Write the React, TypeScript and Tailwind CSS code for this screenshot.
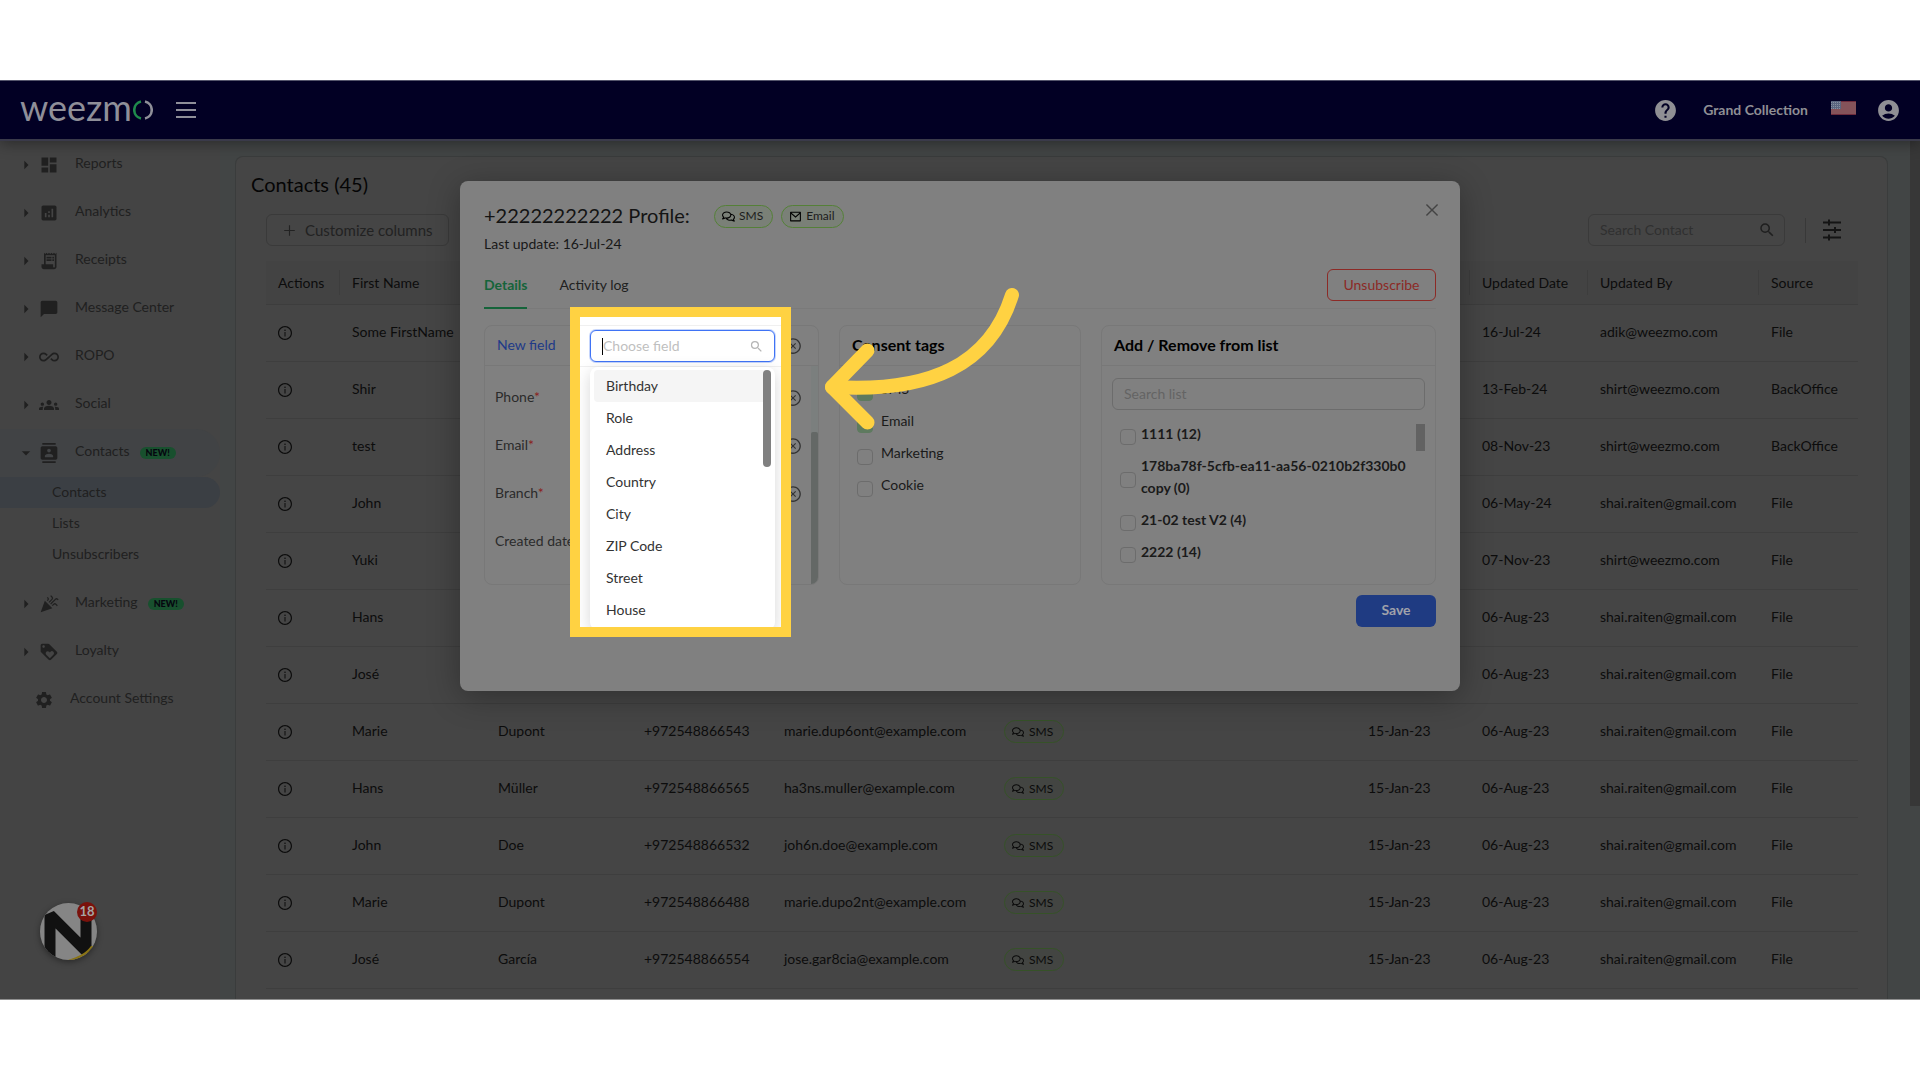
import { useState } from 'react'
import type { ReactNode } from 'react'
import type { IconType } from 'react-icons'
import {
  MdAccountCircle,
  MdAllInclusive,
  MdAnalytics,
  MdArrowDropDown,
  MdArrowRight,
  MdCelebration,
  MdChatBubble,
  MdContacts,
  MdDashboard,
  MdGroups,
  MdHelp,
  MdLoyalty,
  MdReceiptLong,
  MdSearch,
  MdSettings,
} from 'react-icons/md'
import { AiOutlineClose, AiOutlineCloseCircle, AiOutlineInfoCircle, AiOutlinePlus } from 'react-icons/ai'
import { FaRegComments } from 'react-icons/fa'
import { RiMailLine } from 'react-icons/ri'

// ── Data ───────────────────────────────────────────────────────────────────────

type NavItem = { label: string; icon: IconType; isNew?: boolean; children?: string[] }

const NAV: NavItem[] = [
  { label: 'Reports', icon: MdDashboard },
  { label: 'Analytics', icon: MdAnalytics },
  { label: 'Receipts', icon: MdReceiptLong },
  { label: 'Message Center', icon: MdChatBubble },
  { label: 'ROPO', icon: MdAllInclusive },
  { label: 'Social', icon: MdGroups },
  { label: 'Contacts', icon: MdContacts, isNew: true, children: ['Contacts', 'Lists', 'Unsubscribers'] },
  { label: 'Marketing', icon: MdCelebration, isNew: true },
  { label: 'Loyalty', icon: MdLoyalty },
]

const COLUMNS = [
  { title: 'Actions', width: 'w-[74px]' },
  { title: 'First Name', width: 'w-[146px]' },
  { title: '', width: 'w-[146px]' },
  { title: '', width: 'w-[140px]' },
  { title: '', width: 'w-[220px]' },
  { title: '', width: '' },
  { title: '', width: 'w-[114px]' },
  { title: 'Updated Date', width: 'w-[118px]' },
  { title: 'Updated By', width: 'w-[171px]' },
  { title: 'Source', width: 'w-[99px]' },
]

type Contact = {
  first: string
  last?: string
  phone?: string
  email?: string
  created?: string
  updated: string
  by: string
  source: string
}

const FILE_IMPORT = { updated: '06-Aug-23', by: 'shai.raiten@gmail.com', source: 'File' }

const CONTACTS: Contact[] = [
  { first: 'Some FirstName', updated: '16-Jul-24', by: 'adik@weezmo.com', source: 'File' },
  { first: 'Shir', updated: '13-Feb-24', by: 'shirt@weezmo.com', source: 'BackOffice' },
  { first: 'test', updated: '08-Nov-23', by: 'shirt@weezmo.com', source: 'BackOffice' },
  { first: 'John', updated: '06-May-24', by: 'shai.raiten@gmail.com', source: 'File' },
  { first: 'Yuki', updated: '07-Nov-23', by: 'shirt@weezmo.com', source: 'File' },
  { first: 'Hans', ...FILE_IMPORT },
  { first: 'José', ...FILE_IMPORT },
  { first: 'Marie', last: 'Dupont', phone: '+972548866543', email: 'marie.dup6ont@example.com', created: '15-Jan-23', ...FILE_IMPORT },
  { first: 'Hans', last: 'Müller', phone: '+972548866565', email: 'ha3ns.muller@example.com', created: '15-Jan-23', ...FILE_IMPORT },
  { first: 'John', last: 'Doe', phone: '+972548866532', email: 'joh6n.doe@example.com', created: '15-Jan-23', ...FILE_IMPORT },
  { first: 'Marie', last: 'Dupont', phone: '+972548866488', email: 'marie.dupo2nt@example.com', created: '15-Jan-23', ...FILE_IMPORT },
  { first: 'José', last: 'García', phone: '+972548866554', email: 'jose.gar8cia@example.com', created: '15-Jan-23', ...FILE_IMPORT },
]

const PROFILE_FIELDS = [
  { label: 'Phone', required: true },
  { label: 'Email', required: true },
  { label: 'Branch', required: true },
  { label: 'Created date', required: false },
]

const CONSENT_TAGS = [
  { label: 'SMS', checked: true },
  { label: 'Email', checked: true },
  { label: 'Marketing', checked: false },
  { label: 'Cookie', checked: false },
]

const LISTS = ['1111 (12)', '178ba78f-5cfb-ea11-aa56-0210b2f330b0 copy (0)', '21-02 test V2 (4)', '2222 (14)']

const FIELD_OPTIONS = ['Birthday', 'Role', 'Address', 'Country', 'City', 'ZIP Code', 'Street', 'House']

// ── Header ─────────────────────────────────────────────────────────────────────

function Logo() {
  return (
    <a href="#home" aria-label="weezmo" className="flex items-center gap-px text-[#8f8f99]">
      <span className="pb-1.5 text-[36px] leading-10">weezm</span>
      <svg width="20" height="20" viewBox="0 0 20 20" fill="none" strokeWidth="2.6">
        <path d="M8 1.6A8.600 8.600 0 0 0 8 18.400" stroke="#1f8a4c" />
        <path d="M12 1.6A8.600 8.600 0 0 1 12 18.400" stroke="currentColor" />
      </svg>
    </a>
  )
}

function UsFlag() {
  return (
    <svg width="25" height="14" viewBox="0 0 25 14">
      <rect width="25" height="14" fill="#85535a" />
      <path d="M0 .5h25M0 13.5h25" stroke="#6e2b3c" />
      <rect width="10" height="8" fill="#5b6580" />
      <path d="M0 1.5h10M0 3.5h10M0 5.5h10M0 7.5h10" stroke="#8790a0" strokeDasharray="1 1" />
    </svg>
  )
}

function Header() {
  return (
    <header className="relative z-10 flex h-[61px] items-center justify-between border-t border-b-2 border-t-[#55556c] border-b-[#3a3a4a] bg-[#020024] pr-[19px] pl-5 shadow-[0_2px_14px_rgba(0,0,0,0.4)]">
      <div className="flex items-center gap-[23px]">
        <Logo />
        <button type="button" aria-label="Toggle menu" className="flex flex-col gap-[5px]">
          <span className="h-0.5 w-5 bg-[#8f8f99]" />
          <span className="h-0.5 w-5 bg-[#8f8f99]" />
          <span className="h-0.5 w-5 bg-[#8f8f99]" />
        </button>
      </div>
      <div className="flex items-center text-[#8f8f94]">
        <button type="button" aria-label="Help" className="mr-[25px]">
          <MdHelp size={25} />
        </button>
        <span className="mr-[23px] pb-0.5 text-[14px] font-bold">Grand Collection</span>
        <button type="button" aria-label="Language" className="mr-5 pb-1">
          <UsFlag />
        </button>
        <button type="button" aria-label="Account">
          <MdAccountCircle size={25} />
        </button>
      </div>
    </header>
  )
}

// ── Sidebar ────────────────────────────────────────────────────────────────────

function NavRow({ item }: { item: NavItem }) {
  const Icon = item.icon
  const Arrow = item.children ? MdArrowDropDown : MdArrowRight
  return (
    <li>
      <a
        href={`#${item.label}`}
        className={`flex h-12 items-center pl-4 ${item.children ? 'rounded-r-[24px] bg-[#414345]' : 'bg-[#444444]'}`}
      >
        <Arrow size={20} className="mr-[3px]" />
        <Icon size={20} className="mr-4" />
        <span className="pb-1.5">{item.label}</span>
        {item.isNew && (
          <span className="ml-2.5 rounded-full bg-[#18502e] px-1.5 text-[9px] leading-3 font-black text-[#05060f]">NEW!</span>
        )}
      </a>
      {item.children && (
        <ul className="pb-2.5">
          {item.children.map((child, i) => (
            <li key={child}>
              <a
                href={`#${child}`}
                className={`flex h-[31px] items-center rounded-r-2xl pb-0.5 pl-[52px] ${i === 0 ? 'bg-[#3b3f44]' : ''}`}
              >
                {child}
              </a>
            </li>
          ))}
        </ul>
      )}
    </li>
  )
}

function Sidebar() {
  return (
    <nav className="w-[220px] shrink-0 bg-[#444444] text-[14px] text-[#202020]">
      <ul>
        {NAV.map((item) => (
          <NavRow key={item.label} item={item} />
        ))}
        <li>
          <a href="#settings" className="flex h-12 items-center pl-[34px]">
            <MdSettings size={20} className="mr-4" />
            <span className="pb-1.5">Account Settings</span>
          </a>
        </li>
      </ul>
    </nav>
  )
}

function ChatBadge() {
  return (
    <button type="button" aria-label="Open chat" className="absolute bottom-[39px] left-10 rounded-full shadow-[0_2px_6px_rgba(0,0,0,0.4)]">
      <svg width="57" height="57" viewBox="0 0 57 57" className="rounded-full">
        <rect width="57" height="57" fill="#858585" />
        <path d="M10 60V12L46 48V4" fill="none" stroke="#111111" strokeWidth="11" strokeLinejoin="bevel" />
        <path d="M28 57C38 54 46 50 51 43L57 43V57Z" fill="#8a7415" />
      </svg>
      <span className="absolute -top-px right-0 flex size-5 items-center justify-center rounded-full bg-[#7a120c] text-[13px] font-bold text-[#a5a5a5]">
        18
      </span>
    </button>
  )
}

// ── Contacts table ─────────────────────────────────────────────────────────────

function TableTag() {
  return (
    <span className="flex h-[23px] w-[60px] items-center gap-[5px] rounded-full border border-[#365228] bg-[#434542] pl-[7px] text-[12px] text-[#0b0b0b]">
      <FaRegComments size={12} />
      SMS
    </span>
  )
}

function SlidersIcon() {
  return (
    <svg width="18" height="22" viewBox="0 0 18 22" stroke="#141414" strokeWidth="2">
      <path d="M0 3.5H18M0 11H18M0 18.5H18M6 .5V6.500M12 8V14M6 15.500V21.500" />
    </svg>
  )
}

function ContactsTable() {
  return (
    <table className="w-full table-fixed text-left text-[14px] text-[#0c0c0c]">
      <thead>
        <tr className="h-[43px] border-b border-[#3d3d3d] bg-[#434343]">
          {COLUMNS.map((col, i) => (
            <th key={i} scope="col" className={`p-0 font-normal ${col.width}`}>
              <div className={`flex h-[25px] items-center pl-3 ${i < COLUMNS.length - 1 ? 'border-r border-[#3d3d3d]' : ''}`}>
                {col.title}
              </div>
            </th>
          ))}
        </tr>
      </thead>
      <tbody>
        {CONTACTS.map((c, i) => (
          <tr key={i} className="h-[57px] border-b border-[#3e3e3e] whitespace-nowrap">
            <td className="pl-[11px]">
              <button type="button" aria-label="Contact details" className="flex">
                <AiOutlineInfoCircle size={16} />
              </button>
            </td>
            <td className="pb-0.5 pl-3">{c.first}</td>
            <td className="pb-0.5 pl-3">{c.last}</td>
            <td className="pb-0.5 pl-3">{c.phone}</td>
            <td className="pb-0.5 pl-3">{c.email}</td>
            <td className="pl-3">{c.phone && <TableTag />}</td>
            <td className="pb-0.5 pl-3">{c.created}</td>
            <td className="pb-0.5 pl-3">{c.updated}</td>
            <td className="pb-0.5 pl-3">{c.by}</td>
            <td className="pb-0.5 pl-3">{c.source}</td>
          </tr>
        ))}
      </tbody>
    </table>
  )
}

function ContactsPage() {
  return (
    <main className="flex min-w-0 flex-1 bg-[#424545] pt-[15px] pl-[15px]">
      <section className="min-w-0 flex-1 rounded-t-lg border border-b-0 border-[#3a3c3c] bg-[#454545] pb-2.5">
        <h1 className="mt-[13px] ml-[15px] text-[20px] leading-7 text-[#050505]">Contacts (45)</h1>
        <div className="mt-4 mr-[29px] ml-[30px]">
          <div className="flex items-center justify-between">
            <button
              type="button"
              className="flex h-8 items-center gap-2 rounded-md border border-[#3a3a3a] px-[15px] text-[15px] text-[#222222]"
            >
              <AiOutlinePlus size={15} />
              Customize columns
            </button>
            <div className="flex items-center">
              <label className="flex h-8 w-[197px] items-center rounded-md border border-[#3a3a3a] pr-2 pl-[11px]">
                <input
                  type="text"
                  aria-label="Search Contact"
                  placeholder="Search Contact"
                  className="min-w-0 flex-1 bg-transparent pb-0.5 text-[14px] outline-none placeholder:text-[#303030]"
                />
                <MdSearch size={18} className="text-[#1f1f1f]" />
              </label>
              <span className="mr-[17px] ml-5 h-[25px] w-px bg-[#383838]" />
              <button type="button" aria-label="Filters" className="mr-[17px]">
                <SlidersIcon />
              </button>
            </div>
          </div>
          <div className="mt-[15px]">
            <ContactsTable />
          </div>
        </div>
      </section>
      <div className="-mt-[15px] ml-[22px] w-2.5 shrink-0">
        <div className="h-[665px] bg-[#373737]" />
      </div>
    </main>
  )
}

// ── Profile dialog ─────────────────────────────────────────────────────────────

function ChannelTag({ icon: Icon, children }: { icon: IconType; children: ReactNode }) {
  return (
    <span className="flex h-[23px] items-center gap-1 rounded-full border border-[#558038] bg-[#7a8077] pr-[9px] pl-[7px] text-[12px] text-[#1c1c1c]">
      <Icon size={13} className="text-black" />
      {children}
    </span>
  )
}

function Checkbox({ id, checked, onChange }: { id: string; checked?: boolean; onChange?: () => void }) {
  return (
    <input
      id={id}
      type="checkbox"
      checked={checked}
      onChange={onChange}
      className="mt-1.5 size-4 shrink-0 appearance-none rounded border border-[#6c6c6c] checked:border-[#5e7a5f] checked:bg-[#5e7a5f]"
    />
  )
}

function Card({ width, header, children }: { width: string; header: ReactNode; children: ReactNode }) {
  return (
    <section className={`h-[260px] overflow-hidden rounded-lg border border-[#787878] ${width}`}>
      <div className="flex h-10 items-center border-b border-[#787878] pl-3">{header}</div>
      {children}
    </section>
  )
}

function ProfileFields() {
  return (
    <Card
      width="w-[335px] shrink-0"
      header={
        <>
          <a href="#new-field" className="flex-1 pb-0.5 text-[14px] text-[#203a88]">
            New field
          </a>
          <button type="button" aria-label="Cancel new field" className="mr-4 text-[#333333]">
            <AiOutlineCloseCircle size={18} />
          </button>
        </>
      }
    >
      <div className="flex h-full justify-between">
        <ul className="flex-1 pt-2 pr-[9px] pl-2.5 text-[14px] text-[#2b2b2b]">
          {PROFILE_FIELDS.map((field) => (
            <li key={field.label} className="flex h-12 items-center justify-between">
              <span className="pb-1">
                {field.label}
                {field.required && <span className="text-[#8a2020]">*</span>}
              </span>
              {field.required && (
                <button type="button" aria-label={`Clear ${field.label}`} className="text-[#333333]">
                  <AiOutlineCloseCircle size={18} />
                </button>
              )}
            </li>
          ))}
        </ul>
        <div className="w-[7px] bg-[#7b7f7e] pt-[66px]">
          <div className="h-full rounded-t-xs bg-[#646866]" />
        </div>
      </div>
    </Card>
  )
}

function ConsentTags() {
  const [tags, setTags] = useState(CONSENT_TAGS)
  const toggle = (label: string) =>
    setTags(tags.map((t) => (t.label === label ? { ...t, checked: !t.checked } : t)))

  return (
    <Card width="w-[242px] shrink-0" header={<h3 className="pb-0.5 text-[16px] font-bold text-black">Consent tags</h3>}>
      <ul className="pt-2 pl-[17px] text-[14px] text-[#1a1a1a]">
        {tags.map((tag) => (
          <li key={tag.label} className="flex h-8 items-center gap-2">
            <Checkbox id={`tag-${tag.label}`} checked={tag.checked} onChange={() => toggle(tag.label)} />
            <label htmlFor={`tag-${tag.label}`} className="pb-1">
              {tag.label}
            </label>
          </li>
        ))}
      </ul>
    </Card>
  )
}

function ListMembership() {
  return (
    <Card width="min-w-0 flex-1" header={<h3 className="pb-0.5 text-[16px] font-bold text-black">Add / Remove from list</h3>}>
      <div className="px-2.5 pt-3">
        <input
          type="text"
          aria-label="Search list"
          placeholder="Search list"
          className="h-8 w-full rounded-md border border-[#6c6c6c] bg-transparent px-[11px] pb-0.5 text-[14px] outline-none placeholder:text-[#646464]"
        />
        <div className="mt-2 flex items-start justify-between pl-2">
          <ul className="flex-1 text-[14px] leading-[22px] font-bold text-[#1a1a1a]">
            {LISTS.map((name, i) => (
              <li key={name} className="flex items-center gap-[5px] py-[5px]">
                <Checkbox id={`list-${i}`} />
                <label htmlFor={`list-${i}`}>{name}</label>
              </li>
            ))}
          </ul>
          <div className="mt-1.5 h-[27px] w-[9px] shrink-0 bg-[#626262]" />
        </div>
      </div>
    </Card>
  )
}

// Spotlit dropdown: drawn above the dimmed dialog with its own frame
function FieldPicker() {
  return (
    <div className="absolute top-[126px] left-[110px] h-[330px] w-[221px] overflow-hidden border-[10px] border-[#ffd242] bg-white">
      <div className="mt-2 border-y border-[#f0f0f0] py-1">
        <label className="mr-1.5 ml-2.5 flex h-8 items-center rounded-md border border-[#3f73f5] bg-white pr-2.5 pl-[11px] shadow-[0_0_0_1px_rgba(63,115,245,0.3)]">
          <span className="h-[17px] w-px bg-black" />
          <input
            type="text"
            role="combobox"
            aria-expanded="true"
            aria-controls="field-options"
            aria-label="Choose field"
            placeholder="Choose field"
            className="min-w-0 flex-1 bg-transparent pb-0.5 text-[14px] outline-none placeholder:text-[#bfbfbf]"
          />
          <MdSearch size={15} className="text-[#b5b5b5]" />
        </label>
      </div>
      <div className="relative mr-1.5 ml-2.5 rounded-lg bg-white px-1 pt-[3px] pb-1 shadow-[0_4px_16px_rgba(0,0,0,0.16)]">
        <ul id="field-options" role="listbox" className="text-[14px] text-[#333333]">
          {FIELD_OPTIONS.map((option, i) => (
            <li
              key={option}
              role="option"
              aria-selected={i === 0}
              className={`flex h-8 items-center rounded pb-0.5 pl-3 ${i === 0 ? 'bg-[#f5f5f5]' : ''}`}
            >
              {option}
            </li>
          ))}
        </ul>
        <span className="absolute top-[3px] right-1 h-[97px] w-2 rounded-full bg-[#808080]" />
      </div>
    </div>
  )
}

function PointerArrow() {
  return (
    <svg
      width="200"
      height="150"
      viewBox="0 0 200 150"
      fill="none"
      stroke="#ffd242"
      strokeWidth="14"
      strokeLinecap="round"
      strokeLinejoin="round"
      className="pointer-events-none absolute top-[104px] left-[360px]"
    >
      <path d="M192 10C170 80 110 108 12 102" />
      <path d="M47.500 65.500L12 102L47.500 137.500" />
    </svg>
  )
}

function ProfileDialog() {
  return (
    <div className="pointer-events-none absolute inset-x-0 top-[101px] z-20 flex justify-center">
      <div
        role="dialog"
        aria-label="Contact profile"
        className="pointer-events-auto relative w-[1000px] rounded-lg bg-[#808080] px-6 pb-16 shadow-[0_6px_32px_rgba(0,0,0,0.3)]"
      >
        <div className="flex items-start justify-between pt-5">
          <div>
            <div className="flex items-center">
              <h2 className="w-[230px] pb-0.5 text-[20px] leading-7 text-[#141414]">+22222222222 Profile:</h2>
              <div className="flex gap-2">
                <ChannelTag icon={FaRegComments}>SMS</ChannelTag>
                <ChannelTag icon={RiMailLine}>Email</ChannelTag>
              </div>
            </div>
            <p className="mt-0.5 text-[14px] leading-[22px] text-[#181818]">Last update: 16-Jul-24</p>
          </div>
          <button type="button" aria-label="Close" className="-mr-[5px] text-[#444444]">
            <AiOutlineClose size={18} />
          </button>
        </div>

        <div className="mt-3.5 flex h-10 items-start justify-between border-b border-[#7a7a7a]">
          <div role="tablist" className="flex h-10 gap-8 text-[14px]">
            <button type="button" role="tab" aria-selected="true" className="border-b-2 border-[#15643a] pb-2 font-bold text-[#15643a]">
              Details
            </button>
            <button type="button" role="tab" aria-selected="false" className="border-b-2 border-transparent pb-2 text-[#202020]">
              Activity log
            </button>
          </div>
          <button type="button" className="h-8 w-[109px] rounded-md border border-[#8c2a26] pb-0.5 text-[14px] text-[#8c2a26]">
            Unsubscribe
          </button>
        </div>

        <div className="mt-4 flex gap-5">
          <ProfileFields />
          <ConsentTags />
          <ListMembership />
        </div>

        <div className="mt-2.5 flex justify-end">
          <button type="button" className="h-8 w-20 rounded-md bg-[#1f3b82] pb-1 text-[14px] font-bold text-[#a0a2aa]">
            Save
          </button>
        </div>

        <FieldPicker />
        <PointerArrow />
      </div>
    </div>
  )
}

// ── App ────────────────────────────────────────────────────────────────────────

export default function App() {
  return (
    <div className="flex min-h-screen flex-col bg-white py-20 font-[Lato,'Open_Sans',sans-serif]">
      <div className="relative flex flex-1 flex-col overflow-hidden border-b border-[#8f8f8f]">
        <Header />
        <div className="flex flex-1">
          <Sidebar />
          <ContactsPage />
        </div>
        <ChatBadge />
        <ProfileDialog />
      </div>
    </div>
  )
}
